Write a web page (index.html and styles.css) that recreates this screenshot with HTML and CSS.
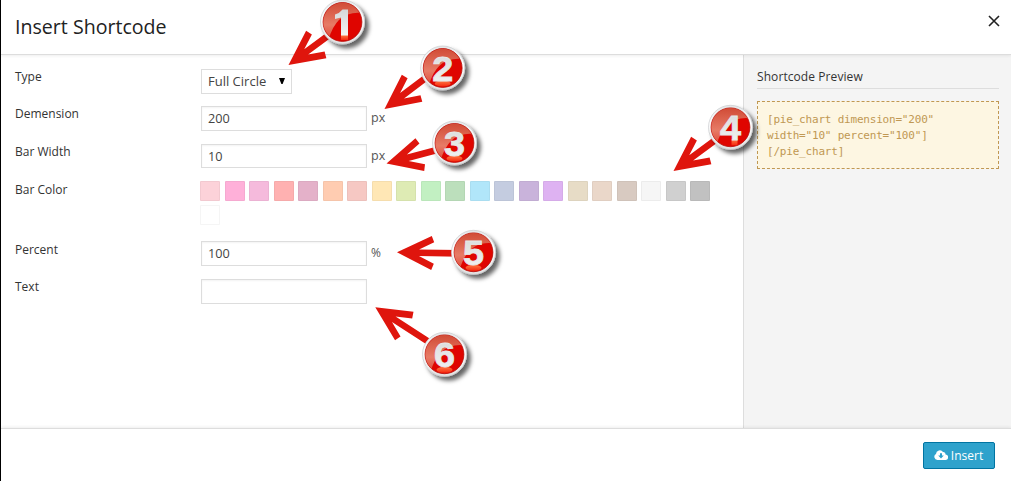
FILE: index.html
```html
<!DOCTYPE html>
<html lang="en">
<head>
<meta charset="utf-8">
<title>Insert Shortcode</title>
<link rel="stylesheet" href="styles.css">
</head>
<body>
<div class="modal">
  <header class="modal-header">
    <h1 class="title">Insert Shortcode</h1>
    <svg class="close" width="12" height="12" viewBox="0 0 12 12"><path d="M1 1L11 11M11 1L1 11" stroke="#222" stroke-width="1.6" fill="none"/></svg>
  </header>
  <div class="modal-body">
    <main class="form">
      <div class="row"><label class="label">Type</label><div class="select"><span>Full Circle</span><svg width="6" height="6" viewBox="0 0 6 6"><path d="M0 0H6L3.6 6H2.4Z" fill="#000"/></svg></div></div>
      <div class="row row-dimension"><label class="label">Demension</label><div class="input">200</div><span class="unit">px</span></div>
      <div class="row row-width"><label class="label">Bar Width</label><div class="input input-short">10</div><span class="unit">px</span></div>
      <div class="row row-color"><label class="label label-low">Bar Color</label>
        <div class="swatches">
          <i class="swatch c1"></i><i class="swatch c2"></i><i class="swatch c3"></i><i class="swatch c4"></i><i class="swatch c5"></i><i class="swatch c6"></i><i class="swatch c7"></i><i class="swatch c8"></i><i class="swatch c9"></i><i class="swatch c10"></i><i class="swatch c11"></i><i class="swatch c12"></i><i class="swatch c13"></i><i class="swatch c14"></i><i class="swatch c15"></i><i class="swatch c16"></i><i class="swatch c17"></i><i class="swatch c18"></i><i class="swatch c19"></i><i class="swatch c20"></i><i class="swatch c21"></i><i class="swatch c22"></i>
        </div>
      </div>
      <div class="row row-percent"><label class="label label-low">Percent</label><div class="input">100</div><span class="unit unit-percent">%</span></div>
      <div class="row"><label class="label">Text</label><div class="input"></div></div>
    </main>
    <aside class="preview">
      <h2 class="preview-title">Shortcode Preview</h2>
      <div class="code">[pie_chart dimension="200"<br>width="10" percent="100"]<br>[/pie_chart]</div>
    </aside>
  </div>
  <footer class="modal-footer">
    <button class="insert"><svg width="14" height="10" viewBox="0 0 14 10"><path d="M3.4 10A3.2 3.2 0 0 1 2 4A3.8 3.8 0 0 1 9 2.1A2.2 2.2 0 0 1 11.5 4.6A2.7 2.7 0 0 1 11.3 10Z" fill="#fff"/><path d="M6 3.2H8V5.6H9.8L7 8.5L4.2 5.6H6Z" fill="#2ea2cc"/></svg><span>Insert</span></button>
  </footer>
</div>

<svg class="callouts" width="1011" height="481" viewBox="0 0 1011 481">
  <defs>
    <linearGradient id="rim" x1="0" y1="0" x2="0" y2="1"><stop offset="0" stop-color="#e4e6e7"/><stop offset=".4" stop-color="#fff"/><stop offset="1" stop-color="#e2e2e2"/></linearGradient>
    <linearGradient id="gloss" x1="0" y1="0" x2="0" y2="1"><stop offset="0" stop-color="#d04a35"/><stop offset=".6" stop-color="#e77b66"/><stop offset="1" stop-color="#df4635"/></linearGradient>
    <linearGradient id="glow" x1="0" y1="0" x2="0" y2="1"><stop offset="0" stop-color="#ff7a45"/><stop offset="1" stop-color="#f52a10"/></linearGradient>
    <linearGradient id="digit" x1="0" y1="0" x2="0" y2="1"><stop offset="0" stop-color="#d6d9da"/><stop offset="1" stop-color="#f4f4f4"/></linearGradient>
    <filter id="shadow" x="-30%" y="-30%" width="180%" height="180%"><feDropShadow dx="4" dy="4" stdDeviation="2.3" flood-color="#000" flood-opacity=".6"/></filter>
    <clipPath id="disc"><circle r="19.2"/></clipPath>
    <path id="arrow" d="M0 0L34.5 -17L37 -10.7L22 -3.3H62V3.3H22L37 10.7L34.5 17Z" fill="#df150d"/>
    <g id="badge">
      <circle r="22" fill="url(#rim)" stroke="#c8cccf" stroke-width=".7" filter="url(#shadow)"/>
      <circle r="19.4" fill="#df0500" stroke="#b50b06" stroke-width=".8"/>
      <path clip-path="url(#disc)" d="M-20 -20H20V-9Q-6 -12 -14 18L-20 14Z" fill="url(#gloss)"/>
    </g>
    <ellipse id="glow-round" cy="15.5" rx="8" ry="3" fill="url(#glow)"/>
  </defs>
  <use href="#arrow" transform="translate(288.5 65) rotate(-36.5)"/>
  <use href="#arrow" transform="translate(384.5 109) rotate(-37)"/>
  <use href="#arrow" transform="translate(386.5 163.5) rotate(-15)"/>
  <use href="#arrow" transform="translate(673.5 171) rotate(-36.5)"/>
  <use href="#arrow" transform="translate(397 252.3) rotate(1)"/>
  <use href="#arrow" transform="translate(375.3 307.3) rotate(32.9)"/>
  <g class="digits">
    <g transform="translate(342.5 22)"><use href="#badge"/><rect x="-1.5" y="13" width="7" height="5" fill="url(#glow)"/><path d="M-1.5 13.4V-4.5L-7.5 -3V-7.5Q-3 -8.6 0 -12.5H5.5V13.4Z" fill="url(#digit)"/></g>
    <g transform="translate(442.7 68)"><use href="#badge"/><use href="#glow-round"/><text y="12.5" textLength="21" lengthAdjust="spacingAndGlyphs">2</text></g>
    <g transform="translate(454.5 143)"><use href="#badge"/><use href="#glow-round"/><text y="12.5" textLength="21" lengthAdjust="spacingAndGlyphs">3</text></g>
    <g transform="translate(730.5 127.3)"><use href="#badge"/><rect x="1" y="12" width="6" height="6" fill="url(#glow)"/><text y="12.5" textLength="21" lengthAdjust="spacingAndGlyphs">4</text></g>
    <g transform="translate(473.5 252.3)"><use href="#badge"/><use href="#glow-round"/><text y="12.5" textLength="21" lengthAdjust="spacingAndGlyphs">5</text></g>
    <g transform="translate(444.5 354.3)"><use href="#badge"/><use href="#glow-round"/><text y="12.5" textLength="21" lengthAdjust="spacingAndGlyphs">6</text></g>
  </g>
</svg>
</body>
</html>
```

FILE: styles.css
```css
* { box-sizing: border-box; }
body { margin: 0; overflow: hidden; font-family: "Open Sans", "Liberation Sans", sans-serif; font-size: 12px; color: #444; }
.modal { height: 481px; display: flex; flex-direction: column; background: #fff; border-left: 1px solid #000; }
.modal-header { height: 55px; display: flex; justify-content: space-between; align-items: center; padding: 0 11px 0 14px; border-bottom: 1px solid #ddd; box-shadow: 0 1px 3px rgba(0,0,0,.07); z-index: 1; }
.title { margin: 0; font-size: 19.6px; font-weight: 400; line-height: 28px; color: #222; }
.close { margin-top: -12px; }
.modal-body { flex: 1; display: flex; min-height: 0; }
.form { width: 742px; padding: 14px 0 0 14px; }
.row { height: 37px; display: flex; align-items: flex-start; }
.row-dimension { height: 38px; }
.row-color { height: 60px; }
.row-percent { height: 38px; }
.label { width: 186px; line-height: 16px; font-weight: 500; color: #333; }
.label-low { line-height: 18px; }
.select { width: 91px; height: 25px; display: flex; align-items: center; justify-content: space-between; border: 1px solid #ddd; padding: 0 6px; line-height: 17px; padding-bottom: 1px; font-size: 13px; }
.input { width: 166px; height: 25px; border: 1px solid #ddd; box-shadow: inset 0 1px 2px rgba(0,0,0,.05); padding: 0 6px; line-height: 22px; font-size: 12.7px; }
.input-short { height: 24px; }
.unit { margin-left: 4px; line-height: 23px; font-size: 12.5px; color: #555; }
.unit-percent { font-size: 12px; }
.swatches { width: 520px; margin-left: -1px; display: flex; flex-wrap: wrap; gap: 4px 4.5px; }
.swatch { width: 20px; height: 20px; border: 1px solid rgba(0,0,0,.04); border-radius: 1px; }
.c1 { background: #fcd2d9; }
.c2 { background: #ffb0d9; }
.c3 { background: #f5badc; }
.c4 { background: #ffb1b1; }
.c5 { background: #e4b1c9; }
.c6 { background: #ffccb1; }
.c7 { background: #f6c8c3; }
.c8 { background: #ffe7b5; }
.c9 { background: #deebb4; }
.c10 { background: #c2f0c2; }
.c11 { background: #bcdfbc; }
.c12 { background: #b1e6fa; }
.c13 { background: #c4cce0; }
.c14 { background: #c9b3db; }
.c15 { background: #deb2f2; }
.c16 { background: #e7dcc6; }
.c17 { background: #ead7c9; }
.c18 { background: #d8cac1; }
.c19 { background: #f6f6f6; }
.c20 { background: #d0d0d0; }
.c21 { background: #c1c1c1; }
.c22 { background: #fff; }
.preview { flex: 1; background: #f4f4f4; border-left: 1px solid #ddd; padding: 14px 12px 0 13px; }
.preview-title { margin: 0 0 12px; height: 20px; font-size: 12px; line-height: 16px; font-weight: 500; color: #333; letter-spacing: .08px; border-bottom: 1px solid #ddd; }
.code { height: 68px; border: 1px dashed #c09853; background: #fdf6e2; color: #c09853; padding: 10px 9px 8px; font: 11px/16px "DejaVu Sans Mono", "Liberation Mono", monospace; letter-spacing: -.2px; white-space: nowrap; }
.modal-footer { height: 53px; display: flex; justify-content: flex-end; align-items: center; padding-right: 16px; border-top: 1px solid #ddd; box-shadow: 0 -1px 3px rgba(0,0,0,.07); z-index: 1; }
.insert { width: 72px; height: 27px; display: flex; align-items: center; justify-content: center; gap: 3px; padding: 0 1px 0 0; border: 1px solid #0074a2; border-radius: 2px; background: #2ea2cc; color: #fff; font: 12px "Open Sans", sans-serif; }
.callouts { position: absolute; left: 0; top: 0; z-index: 2; pointer-events: none; }
.digits text { font: bold 35px "Liberation Sans", sans-serif; text-anchor: middle; fill: url(#digit); stroke: #e6e8e8; stroke-width: .8px; }
```
